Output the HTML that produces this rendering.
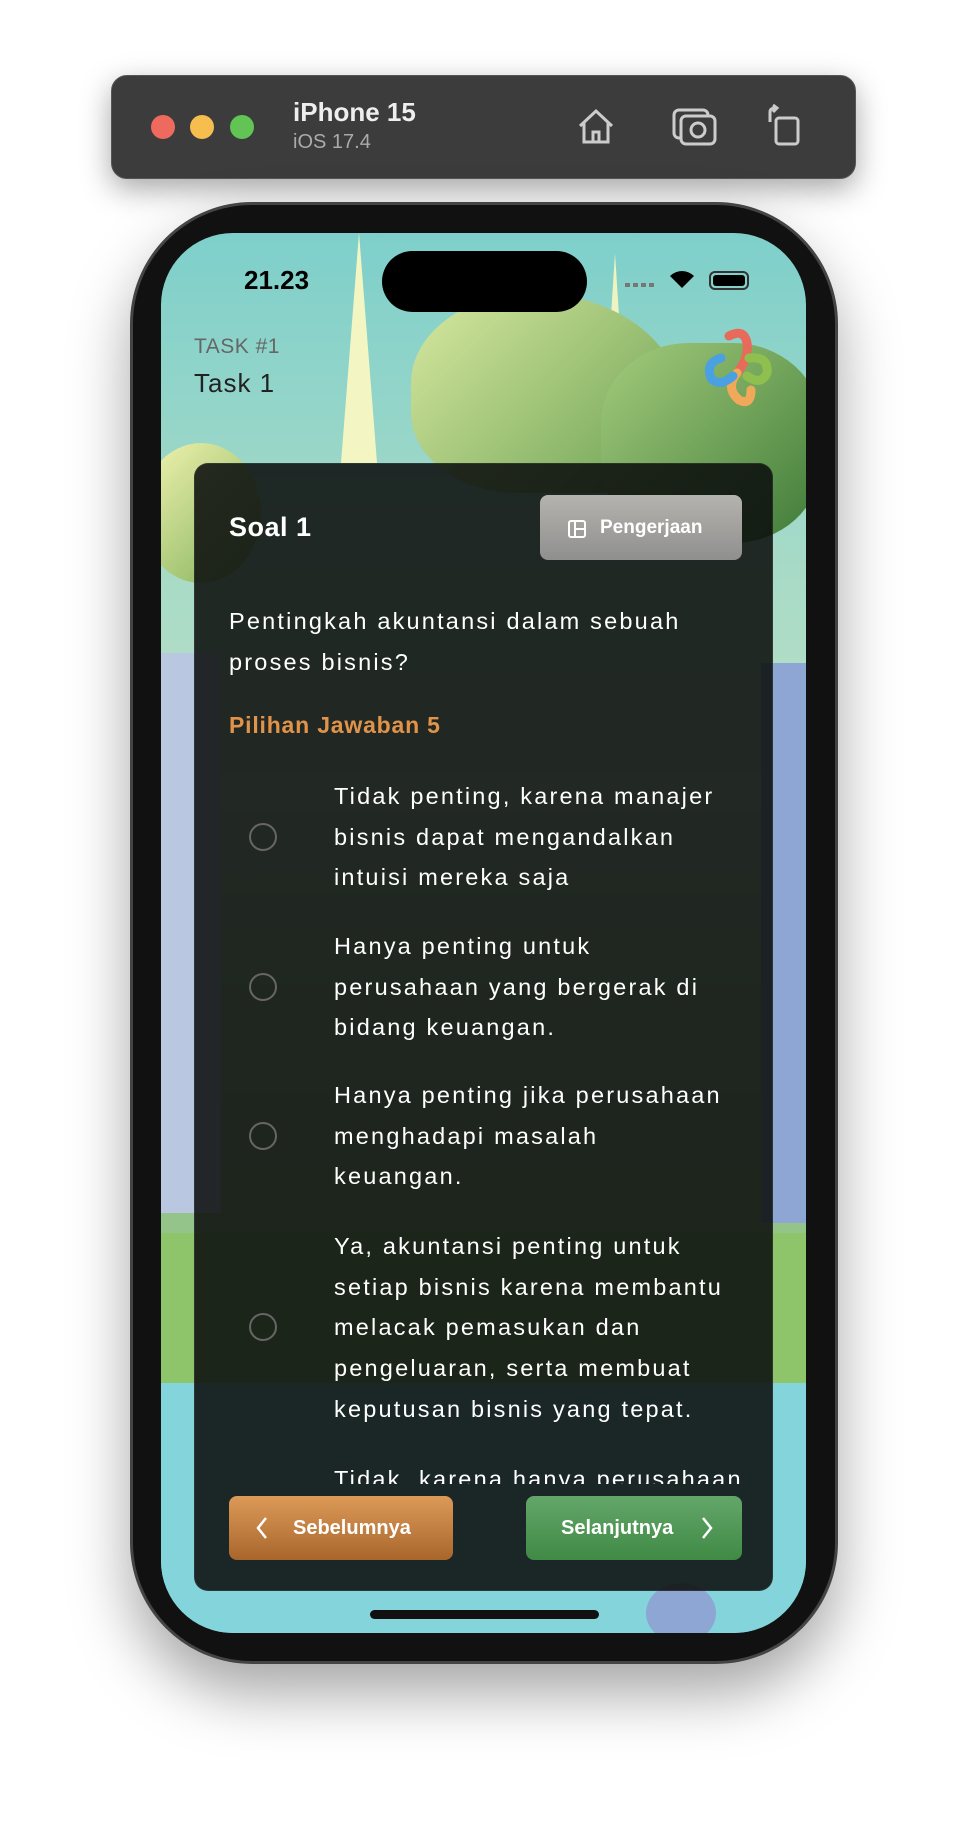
<!DOCTYPE html>
<html><head><meta charset="utf-8">
<style>
*{margin:0;padding:0;box-sizing:border-box}
body{width:972px;height:1824px;background:#fff;position:relative;overflow:hidden;font-family:"Liberation Sans",sans-serif}
.abs{position:absolute}
.tb{left:111px;top:75px;width:745px;height:104px;border-radius:16px;background:#3c3c3c;box-shadow:0 10px 30px rgba(0,0,0,.35);border:1px solid #555}
.dot{width:24px;height:24px;border-radius:50%;top:115px}
.phone{left:130px;top:202px;width:708px;height:1462px;border-radius:122px;background:#111;border:3px solid #444;box-shadow:0 30px 60px rgba(0,0,0,.35)}
.screen{left:161px;top:233px;width:645px;height:1400px;border-radius:72px;overflow:hidden;background:linear-gradient(#7ecfcb 0%,#a9dbc7 25%,#b9e0c4 40%,#9ec89a 60%,#8cc07a 80%,#7fd3db 100%)}
.card{left:33px;top:230px;width:579px;height:1128px;border-radius:14px;background:rgba(12,15,14,.88);border:1px solid rgba(255,255,255,.08)}
.t{color:#fff;font-size:23.5px;letter-spacing:2.2px;line-height:40.7px}
.radio{width:28px;height:28px;border-radius:50%;border:2.5px solid #666}
</style></head><body>
<div class="abs tb"></div>
<div class="abs dot" style="left:151px;background:#ee6a5e"></div>
<div class="abs dot" style="left:190px;background:#f5be4f"></div>
<div class="abs dot" style="left:230px;background:#61c454"></div>
<div class="abs" style="left:293px;top:97px;color:#eee;font-weight:bold;font-size:26px">iPhone 15</div>
<div class="abs" style="left:293px;top:131px;color:#aaa;font-size:20px">iOS 17.4</div>
<svg class="abs" style="left:576px;top:106px" width="40" height="40" viewBox="0 0 40 40" fill="none" stroke="#ccc" stroke-width="3"><path d="M4 20 L20 5 L36 20 M8 17 V36 H32 V17 M17 36 V26 H23 V36"/></svg>
<svg class="abs" style="left:672px;top:107px" width="46" height="40" viewBox="0 0 46 40" fill="none" stroke="#ccc" stroke-width="3"><rect x="2" y="3" width="34" height="28" rx="5"/><rect x="9" y="9" width="34" height="28" rx="5" fill="#3c3c3c"/><circle cx="26" cy="23" r="7"/></svg>
<svg class="abs" style="left:766px;top:104px" width="36" height="42" viewBox="0 0 36 42" fill="none" stroke="#ccc" stroke-width="3"><rect x="10" y="14" width="22" height="26" rx="3"/><path d="M4 18 V8 Q4 4 10 4 M7 1 L11 4 L7 8"/></svg>

<div class="abs phone"></div>
<div class="abs screen">
 <div class="abs" style="left:180px;top:0;width:0;height:0;border-left:18px solid transparent;border-right:18px solid transparent;border-bottom:230px solid #f3f6c2"></div>
 <div class="abs" style="left:440px;top:20px;width:0;height:0;border-left:14px solid transparent;border-right:14px solid transparent;border-bottom:220px solid #eef4c0"></div>
 <div class="abs" style="left:250px;top:60px;width:270px;height:200px;border-radius:45% 55% 30% 40%;background:linear-gradient(135deg,#d8e9a0,#6aa052)"></div>
 <div class="abs" style="left:440px;top:110px;width:220px;height:200px;border-radius:40%;background:linear-gradient(135deg,#a4cc7c,#3e7a38)"></div>
 <div class="abs" style="left:-20px;top:210px;width:120px;height:140px;border-radius:50%;background:linear-gradient(135deg,#f4f4b0,#7fb15a)"></div>
 <div class="abs" style="left:0;top:420px;width:60px;height:560px;background:#b9c8e0"></div>
 <div class="abs" style="left:600px;top:430px;width:45px;height:560px;background:#8ea6d4"></div>
 <div class="abs" style="left:0;top:1000px;width:645px;height:150px;background:#8ec46a"></div>
 <div class="abs" style="left:0;top:1150px;width:645px;height:250px;background:#84d4dc"></div>
 <div class="abs" style="left:485px;top:1350px;width:70px;height:60px;border-radius:50%;background:#8ea6d4"></div>
 <div class="abs" style="left:221px;top:18px;width:205px;height:61px;border-radius:31px;background:#000"></div>
 <div class="abs" style="left:83px;top:32px;font-weight:bold;font-size:26px;color:#000">21.23</div>
 <div class="abs" style="left:464px;top:50px;width:30px;height:4px;background:repeating-linear-gradient(90deg,#777 0 5px,transparent 5px 8px)"></div>
 <svg class="abs" style="left:508px;top:36px" width="26" height="20" viewBox="0 0 26 20"><path d="M13 19 L1 7 A17 17 0 0 1 25 7 Z" fill="#000"/></svg>
 <div class="abs" style="left:548px;top:38px;width:40px;height:19px;border-radius:6px;border:2px solid #333;padding:2px"><div style="width:100%;height:100%;background:#000;border-radius:3px"></div></div>
 <div class="abs" style="left:33px;top:102px;font-size:21px;color:#666;letter-spacing:.5px">TASK #1</div>
 <div class="abs" style="left:33px;top:135px;font-size:26px;color:#222;letter-spacing:1px">Task 1</div>
 <svg class="abs" style="left:538px;top:95px" width="80" height="80" viewBox="0 0 80 80" fill="none" stroke-width="9" stroke-linecap="round"><path d="M30 8 Q45 0 48 15 Q50 30 38 45" stroke="#e86a5a"/><path d="M38 45 Q26 60 40 72 Q52 78 52 62" stroke="#f0a85a"/><path d="M22 30 Q6 35 12 50 Q20 60 34 48" stroke="#4aa0e0"/><path d="M50 30 Q70 28 68 45 Q62 58 48 48" stroke="#8fbf4f"/></svg>

 <div class="abs card">
  <div class="abs" style="left:34px;top:48px;color:#fff;font-weight:bold;font-size:27px;letter-spacing:.5px">Soal 1</div>
  <div class="abs" style="left:345px;top:31px;width:202px;height:65px;border-radius:8px;background:linear-gradient(#b5b3ae,#8f8f8e);color:#fff;font-weight:bold;font-size:19px;line-height:65px;padding-left:60px">Pengerjaan</div>
  <svg class="abs" style="left:373px;top:56px" width="18" height="18" viewBox="0 0 18 18" fill="none" stroke="#fff" stroke-width="2"><rect x="1" y="1" width="16" height="16" rx="2"/><path d="M7 1V17M7 9H17"/></svg>
  <div class="abs t" style="left:34px;top:137px;width:470px">Pentingkah akuntansi dalam sebuah proses bisnis?</div>
  <div class="abs" style="left:34px;top:248px;color:#e19349;font-weight:bold;font-size:23px;letter-spacing:.8px">Pilihan Jawaban 5</div>
  <div class="abs" style="left:0;top:300px;width:579px;height:720px;overflow:hidden">
   <div class="abs radio" style="top:59px;left:54px"></div>
   <div class="abs t" style="left:139px;top:12px;width:395px">Tidak penting, karena manajer bisnis dapat mengandalkan intuisi mereka saja</div>
   <div class="abs radio" style="top:209px;left:54px"></div>
   <div class="abs t" style="left:139px;top:162px;width:395px">Hanya penting untuk perusahaan yang bergerak di bidang keuangan.</div>
   <div class="abs radio" style="top:358px;left:54px"></div>
   <div class="abs t" style="left:139px;top:311px;width:395px">Hanya penting jika perusahaan menghadapi masalah keuangan.</div>
   <div class="abs radio" style="top:549px;left:54px"></div>
   <div class="abs t" style="left:139px;top:462px;width:395px">Ya, akuntansi penting untuk setiap bisnis karena membantu melacak pemasukan dan pengeluaran, serta membuat keputusan bisnis yang tepat.</div>
   <div class="abs t" style="left:139px;top:695px;width:440px;white-space:nowrap">Tidak, karena hanya perusahaan</div>
  </div>
  <div class="abs" style="left:34px;top:1032px;width:224px;height:64px;border-radius:8px;background:linear-gradient(#dc9a58,#a9662c);color:#fff;font-weight:bold;font-size:20px;line-height:64px;padding-left:64px">Sebelumnya</div>
  <svg class="abs" style="left:60px;top:1052px" width="14" height="24" viewBox="0 0 14 24" fill="none" stroke="#fff" stroke-width="2.5"><path d="M11 2 L3 12 L11 22"/></svg>
  <div class="abs" style="left:331px;top:1032px;width:216px;height:64px;border-radius:8px;background:linear-gradient(#64a66a,#3f8a45);color:#fff;font-weight:bold;font-size:20px;line-height:64px;padding-left:35px">Selanjutnya</div>
  <svg class="abs" style="left:505px;top:1052px" width="14" height="24" viewBox="0 0 14 24" fill="none" stroke="#fff" stroke-width="2.5"><path d="M3 2 L11 12 L3 22"/></svg>
 </div>
 <div class="abs" style="left:209px;top:1377px;width:229px;height:9px;border-radius:5px;background:#111"></div>
</div>
</body></html>
